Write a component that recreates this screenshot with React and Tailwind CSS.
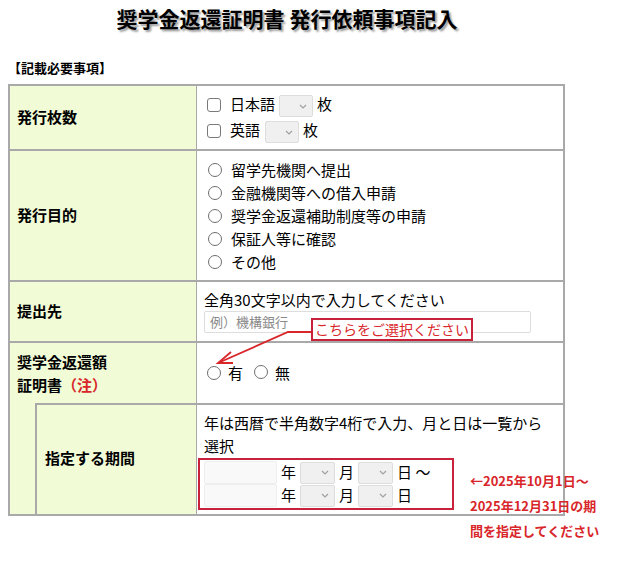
import React from 'react';

const font = { fontFamily: '"Noto Sans CJK JP", "Noto Sans", sans-serif' };

function Check() {
  return <span className="inline-block w-[14px] h-[14px] rounded-[3px] border border-[#7a7a7a] bg-white shrink-0" />;
}

function Radio() {
  return <span className="inline-block w-[14px] h-[14px] rounded-full border border-[#6f6f6f] bg-white shrink-0" />;
}

function Select({ w = 'w-[35px]' }) {
  return (
    <span className={`inline-flex items-center justify-end ${w} h-[22px] bg-[#f0f0f0] border border-[#dddddd] rounded-[2px] pr-[5px] shrink-0`}>
      <svg width="8" height="5" viewBox="0 0 8 5" fill="none" stroke="#a0a0a0" strokeWidth="1.2">
        <path d="M1 1l3 3 3-3" />
      </svg>
    </span>
  );
}

function DateRow({ last }) {
  return (
    <div className="flex items-center h-[23px]">
      <span className="inline-block w-[73px] h-[23px] bg-[#f9f9f9] border border-[#eeeeee] rounded-[2px]" />
      <span className="mx-[4px]">年</span>
      <Select />
      <span className="mx-[4px]">月</span>
      <Select />
      <span className="ml-[4px]">{last ? '日' : '日 ～'}</span>
    </div>
  );
}

export default function App() {
  return (
    <div className="relative w-[633px] h-[562px] bg-white text-[15px] text-black" style={font}>
      <div className="w-[574px] pt-[4px] text-center text-[21px] leading-[28px] font-bold [text-shadow:2px_2px_2px_#9a9a9a]">
        奨学金返還証明書 発行依頼事項記入
      </div>
      <div className="mt-[27px] ml-[8px] text-[13px] leading-[18px] font-bold">【記載必要事項】</div>

      <div className="mt-[7px] ml-[8px] w-[557px] border-2 border-[#a9a9a9]">
        <div className="flex h-[65px] border-b-2 border-[#a9a9a9]">
          <div className="w-[187px] bg-[#f1fbd6] border-r border-[#a9a9a9] flex items-center pl-[7px] font-bold">発行枚数</div>
          <div className="flex-1 flex flex-col justify-center pl-[10px]">
            <div className="flex items-center h-[26px]">
              <Check />
              <span className="ml-[9px]">日本語</span>
              <span className="ml-[4px]"><Select w="w-[34px]" /></span>
              <span className="ml-[4px]">枚</span>
            </div>
            <div className="flex items-center h-[26px]">
              <Check />
              <span className="ml-[9px]">英語</span>
              <span className="ml-[5px]"><Select w="w-[34px]" /></span>
              <span className="ml-[4px]">枚</span>
            </div>
          </div>
        </div>

        <div className="flex h-[131px] border-b-2 border-[#a9a9a9]">
          <div className="w-[187px] bg-[#f1fbd6] border-r border-[#a9a9a9] flex items-center pl-[7px] font-bold">発行目的</div>
          <div className="flex-1 flex flex-col justify-center pl-[11px] leading-[23px]">
            {['留学先機関へ提出', '金融機関等への借入申請', '奨学金返還補助制度等の申請', '保証人等に確認', 'その他'].map((t) => (
              <div key={t} className="flex items-center h-[23px]">
                <Radio />
                <span className="ml-[9px]">{t}</span>
              </div>
            ))}
          </div>
        </div>

        <div className="flex h-[61px] border-b-2 border-[#a9a9a9]">
          <div className="w-[187px] bg-[#f1fbd6] border-r border-[#a9a9a9] flex items-center pl-[7px] font-bold">提出先</div>
          <div className="flex-1 flex flex-col justify-center pl-[7px] pb-[3px]">
            <div className="leading-[23px]">全角30文字以内で入力してください</div>
            <div className="w-[327px] h-[22px] border border-[#dddddd] rounded-[2px] flex items-center pl-[5px] text-[13px] text-[#8a8a8a]">例）機構銀行</div>
          </div>
        </div>

        <div className="flex">
          <div className="w-[187px] bg-[#f1fbd6] border-r border-[#a9a9a9] flex flex-col">
            <div className="h-[60px] flex flex-col justify-center pl-[7px] font-bold leading-[23px]">
              <div>奨学金返還額</div>
              <div>証明書<span className="text-[#d8262a]">（注）</span></div>
            </div>
            <div className="flex h-[111px]">
              <div className="w-[25px]" />
              <div className="flex-1 border-l-2 border-t-2 border-[#a9a9a9] flex items-center pl-[8px] pb-[2px] font-bold">指定する期間</div>
            </div>
          </div>
          <div className="flex-1 flex flex-col">
            <div className="h-[60px] flex items-center pl-[10px]">
              <Radio />
              <span className="ml-[7px]">有</span>
              <span className="ml-[11px]"><Radio /></span>
              <span className="ml-[7px]">無</span>
            </div>
            <div className="h-[111px] border-t-2 border-[#a9a9a9] pt-[6px]">
              <div className="pl-[7px] pr-[8px] leading-[23px]">年は西暦で半角数字4桁で入力、月と日は一覧から選択</div>
              <div className="ml-[1px] mt-[1px] w-[256px] border-2 border-[#c8213a] pl-[4px] py-[1px]">
                <DateRow />
                <DateRow last />
              </div>
            </div>
          </div>
        </div>
      </div>

      <div className="absolute left-[311px] top-[318px] h-[23px] px-[2px] border-2 border-[#c8213a] bg-white text-[14px] leading-[19px] text-[#d8262a]">
        こちらをご選択ください
      </div>
      <svg className="absolute left-[210px] top-[325px]" width="105" height="45" viewBox="0 0 105 45" fill="none" stroke="#d8262a" strokeWidth="1.8">
        <polyline points="101,7 78,7 8,38" />
        <polyline points="21,27 8,38 23,38" />
      </svg>

      <div className="absolute left-[470px] top-[468px] text-[13px] leading-[25px] font-bold text-[#d8262a]">
        <div>←2025年10月1日～</div>
        <div>2025年12月31日の期</div>
        <div>間を指定してください</div>
      </div>
    </div>
  );
}
